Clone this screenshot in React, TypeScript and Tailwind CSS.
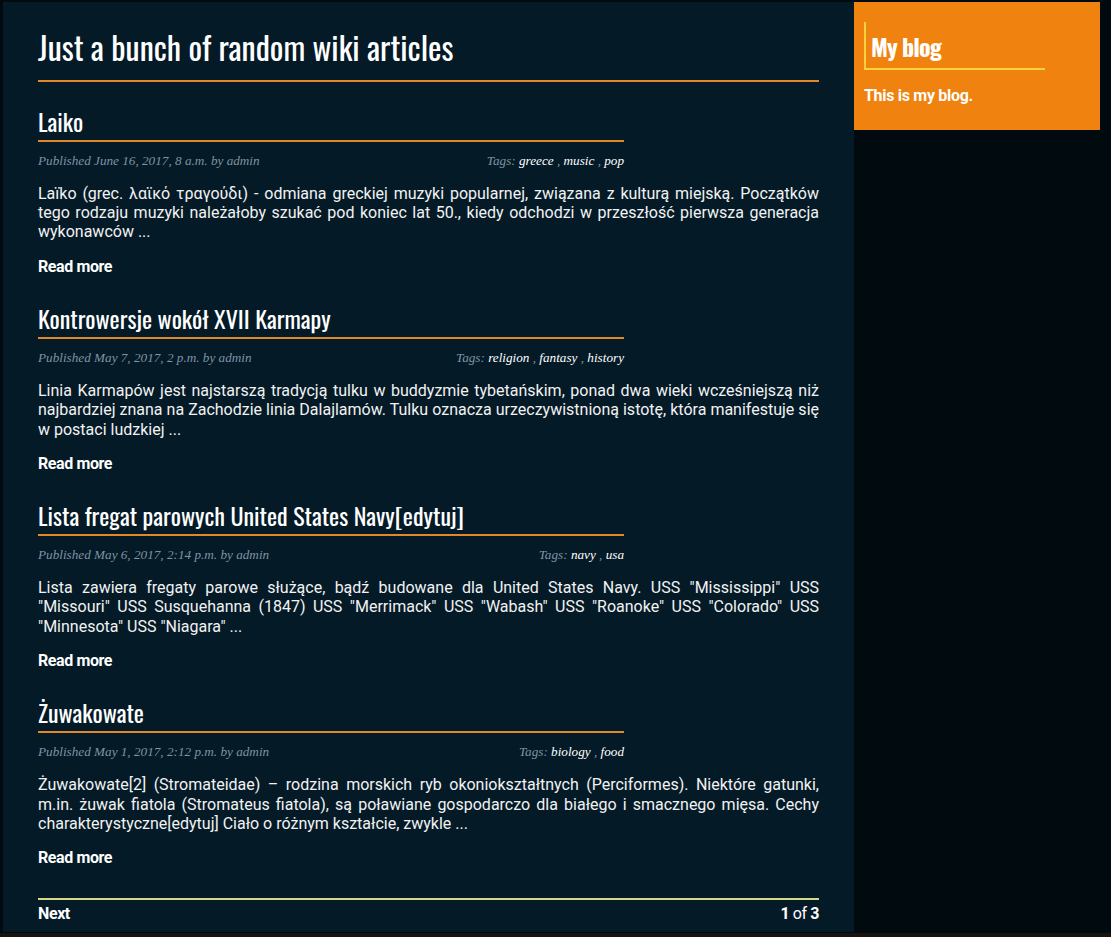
import React from "react";

const HEAD = { fontFamily: '"Oswald", "Liberation Sans Narrow", "DejaVu Sans Condensed", "Roboto Condensed", sans-serif' };
const SERIF = { fontFamily: '"Liberation Serif", "DejaVu Serif", serif' };
const BODY = { fontFamily: 'Roboto, "Noto Sans", sans-serif' };

type Post = { title: string; date: string; tags: string[]; text: string };

const posts: Post[] = [
  {
    title: "Laiko",
    date: "June 16, 2017, 8 a.m.",
    tags: ["greece", "music", "pop"],
    text: "Laïko (grec. λαϊκό τραγούδι) - odmiana greckiej muzyki popularnej, związana z kulturą miejską. Początków tego rodzaju muzyki należałoby szukać pod koniec lat 50., kiedy odchodzi w przeszłość pierwsza generacja wykonawców ...",
  },
  {
    title: "Kontrowersje wokół XVII Karmapy",
    date: "May 7, 2017, 2 p.m.",
    tags: ["religion", "fantasy", "history"],
    text: "Linia Karmapów jest najstarszą tradycją tulku w buddyzmie tybetańskim, ponad dwa wieki wcześniejszą niż najbardziej znana na Zachodzie linia Dalajlamów. Tulku oznacza urzeczywistnioną istotę, która manifestuje się w postaci ludzkiej ...",
  },
  {
    title: "Lista fregat parowych United States Navy[edytuj]",
    date: "May 6, 2017, 2:14 p.m.",
    tags: ["navy", "usa"],
    text: 'Lista zawiera fregaty parowe służące, bądź budowane dla United States Navy. USS "Mississippi" USS "Missouri" USS Susquehanna (1847) USS "Merrimack" USS "Wabash" USS "Roanoke" USS "Colorado" USS "Minnesota" USS "Niagara" ...',
  },
  {
    title: "Żuwakowate",
    date: "May 1, 2017, 2:12 p.m.",
    tags: ["biology", "food"],
    text: "Żuwakowate[2] (Stromateidae) – rodzina morskich ryb okoniokształtnych (Perciformes). Niektóre gatunki, m.in. żuwak fiatola (Stromateus fiatola), są poławiane gospodarczo dla białego i smacznego mięsa. Cechy charakterystyczne[edytuj] Ciało o różnym kształcie, zwykle ...",
  },
];

function PostItem({ p, first }: { p: Post; first: boolean }) {
  return (
    <div className={first ? "mt-[24px]" : "mt-[26.5px]"}>
      <div className="w-[586px] border-b-2 border-[#e2882a] pb-[4px]">
        <h2 className="text-[24px] leading-[30px] text-white" style={HEAD}>
          {p.title}
        </h2>
      </div>
      <div className="mt-[10px] flex w-[586px] justify-between text-[13.2px] italic leading-[18px] text-[#7f93a5]" style={SERIF}>
        <span>Published {p.date} by admin</span>
        <span>
          Tags:{" "}
          {p.tags.map((t, i) => (
            <React.Fragment key={t}>
              <span className="text-white">{t}</span>
              {i < p.tags.length - 1 ? " , " : ""}
            </React.Fragment>
          ))}
        </span>
      </div>
      <p className="mt-[14px] text-justify text-[16px] leading-[19.2px] text-[#f2f2f2]" style={BODY}>
        {p.text}
      </p>
      <div className="mt-[15px] text-[16px] font-bold leading-[20px] tracking-[-0.4px] text-white" style={BODY}>
        Read more
      </div>
    </div>
  );
}

export default function App() {
  return (
    <div className="relative h-[937px] w-[1111px] overflow-hidden bg-[#010a0f]">
      <div className="flex items-start pt-[2px]">
        <main className="ml-[3px] h-[930px] w-[851px] bg-[#041a27] px-[35px] pt-[25px]">
          <div className="border-b-2 border-[#e2882a] pb-[13px]">
            <h1 className="text-[32px] leading-[40px] text-white" style={HEAD}>
              Just a bunch of random wiki articles
            </h1>
          </div>
          {posts.map((p, i) => (
            <PostItem key={p.title} p={p} first={i === 0} />
          ))}
          <div className="mt-[30px] border-t-2 border-[#d6d98a] pt-[4px]">
            <div className="flex justify-between text-[16px] leading-[20px] text-white tracking-[-0.4px]" style={BODY}>
              <span className="font-bold">Next</span>
              <span>
                <span className="font-bold">1</span> of <span className="font-bold">3</span>
              </span>
            </div>
          </div>
        </main>
        <aside className="w-[246px] bg-[#f08310] px-[10px] pb-[24px] pt-[20px]">
          <div className="w-[181px] border-b-2 border-l-2 border-[#f7d23a] pl-[5px] pt-[6px] pb-[4px]">
            <h3 className="text-[24px] font-bold leading-[36px] tracking-[-0.9px] text-white" style={HEAD}>
              My blog
            </h3>
          </div>
          <p className="mt-[16px] text-[16px] font-bold leading-[20px] text-white tracking-[-0.3px]" style={BODY}>
            This is my blog.
          </p>
        </aside>
      </div>
      <div className="absolute bottom-0 left-0 h-[4px] w-full bg-[#1a140f]" />
    </div>
  );
}
